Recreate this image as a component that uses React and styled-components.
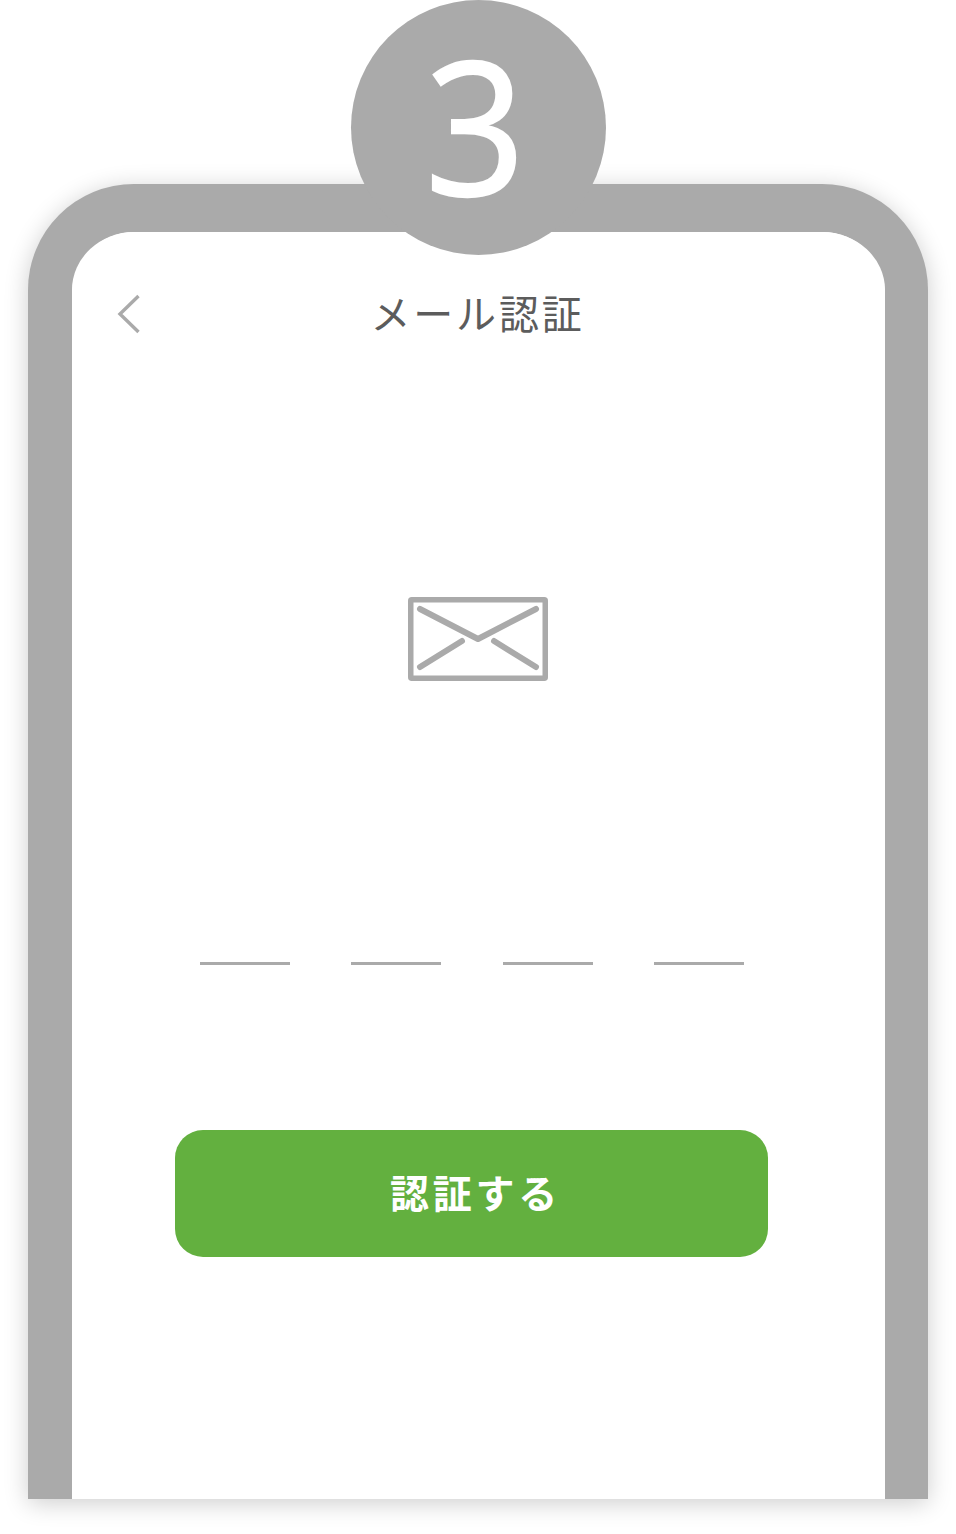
import React from 'react';
import styled, { createGlobalStyle } from 'styled-components';

const Global = createGlobalStyle`
  html, body {
    margin: 0;
    padding: 0;
    background: #fff;
    overflow: hidden;
  }
  body {
    font-family: "Noto Sans CJK JP", "Noto Sans", sans-serif;
  }
`;

const Page = styled.div`
  position: relative;
  width: 956px;
  height: 1534px;
  padding: 184px 28px 0;
  box-sizing: border-box;
  overflow: hidden;
`;

const Badge = styled.div`
  position: absolute;
  top: 0;
  left: 351px;
  width: 255px;
  height: 255px;
  box-sizing: border-box;
  padding: 0 7px 9px 0;
  border-radius: 50%;
  background: #aaaaaa;
  display: flex;
  align-items: center;
  justify-content: center;
  z-index: 2;
`;

const BadgeNumber = styled.span`
  display: block;
  color: #fff;
  font-family: "Open Sans", sans-serif;
  font-size: 186px;
  font-weight: 400;
  line-height: 1;
  -webkit-text-stroke: 2.5px #fff;
  transform: scaleX(0.94);
`;

const Frame = styled.div`
  width: 900px;
  height: 1315px;
  box-sizing: border-box;
  background: #fff;
  border: solid #aaaaaa;
  border-width: 48px 43px 0 44px;
  border-radius: 106px 106px 0 0;
  box-shadow: 0 4px 24px rgba(0, 0, 0, 0.2);
  display: flex;
  flex-direction: column;
`;

const Inner = styled.div`
  flex: 1;
  background: #fff;
  border-radius: 62px 62px 0 0;
  display: flex;
  flex-direction: column;
`;

const Header = styled.header`
  display: grid;
  grid-template-columns: 1fr auto 1fr;
  align-items: center;
  height: 60px;
  margin-top: 52px;
  padding: 0 45px;
`;

const Back = styled.button`
  justify-self: start;
  display: flex;
  padding: 0;
  border: 0;
  background: none;
`;

const Title = styled.h1`
  margin: 0 2px 4px 0;
  color: #5c5c5c;
  font-size: 40px;
  font-weight: 400;
  line-height: 56px;
  letter-spacing: 2.8px;
  white-space: nowrap;
`;

const Mail = styled.svg`
  display: block;
  align-self: center;
  margin: 253px 2px 0 0;
`;

const Form = styled.div`
  display: flex;
  flex-direction: column;
  align-items: center;
  margin-right: 13px;
`;

const CodeRow = styled.div`
  display: flex;
  gap: 61.5px;
  margin-top: 281px;
`;

const CodeSlot = styled.span`
  display: block;
  width: 90px;
  height: 3px;
  background: #aaaaaa;
`;

const Submit = styled.button`
  width: 593px;
  height: 127px;
  margin: 165px 2px 0 0;
  border: 0;
  border-radius: 28px;
  background: #63b03f;
  color: #fff;
  font-family: inherit;
  font-size: 39px;
  font-weight: 700;
  letter-spacing: 3.8px;
  padding: 0 0 6px 9px;
`;

const App = () => (
  <Page>
    <Global />
    <Badge>
      <BadgeNumber>3</BadgeNumber>
    </Badge>
    <Frame>
      <Inner>
        <Header>
          <Back aria-label="戻る">
            <svg width="24" height="40" viewBox="0 0 24 40" fill="none">
              <path d="M21.5 2 L3 20 L21.5 38" stroke="#aaaaaa" strokeWidth="3.4" />
            </svg>
          </Back>
          <Title>メール認証</Title>
        </Header>
        <Mail width="140" height="84" viewBox="0 0 140 84" fill="none" stroke="#aaaaaa">
          <rect x="2.75" y="2.75" width="134.5" height="78.5" rx="1" strokeWidth="5.5" />
          <path
            d="M12 12 L70 42 L128 12 M12 70 L54 44 M86 44 L128 70"
            strokeWidth="6"
            strokeLinecap="round"
            strokeLinejoin="round"
          />
        </Mail>
        <Form>
          <CodeRow>
            <CodeSlot />
            <CodeSlot />
            <CodeSlot />
            <CodeSlot />
          </CodeRow>
          <Submit>認証する</Submit>
        </Form>
      </Inner>
    </Frame>
  </Page>
);

export default App;
